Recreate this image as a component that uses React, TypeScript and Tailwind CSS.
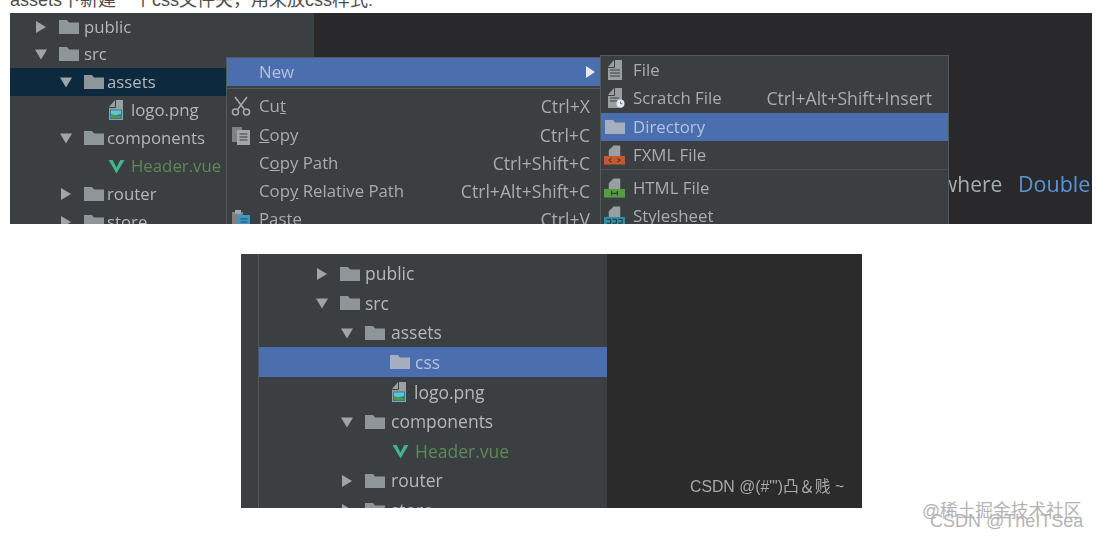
import type { ReactNode } from 'react'

const ui = "font-['Open_Sans','Noto_Sans',sans-serif]"

function Arrow({ open }: { open?: boolean }) {
  return (
    <svg viewBox="0 0 12 12" className="h-3 w-3 shrink-0">
      {open ? <path d="M0 1.5h12L6 11.5z" fill="#a0a4a6" /> : <path d="M1 0v12l10-6z" fill="#a0a4a6" />}
    </svg>
  )
}

function Folder({ color = '#8f9699', className = 'h-[14px] w-5' }: { color?: string; className?: string }) {
  return (
    <svg viewBox="0 0 20 14" className={`shrink-0 ${className}`}>
      <path d="M0 0h8l2 2.5h10V14H0z" fill={color} />
    </svg>
  )
}

function Sheet({ children }: { children?: ReactNode }) {
  return (
    <svg viewBox="0 0 20 20" className="h-5 w-5 shrink-0">
      <path d="M3 7l6-7h8v20H3z" fill="#9a9fa1" />
      <path d="M2.5 7.5h7V0" fill="none" stroke="#3c3f41" strokeWidth="1" />
      {children}
    </svg>
  )
}

function PngIcon() {
  return (
    <Sheet>
      <path d="M4 9.5h12V19H4z" fill="#2b7d92" />
      <path d="M5 10.5h10v3.5L5 16z" fill="#67c3d1" />
      <path d="M5 14l10 2.5V18H5z" fill="#4e9a4c" />
    </Sheet>
  )
}

function VueIcon() {
  return (
    <svg viewBox="0 0 18 16" className="h-[15px] w-[17px] shrink-0">
      <path d="M0.5 1h4.4L9 9l4.1-8h4.4L9 15.5z" fill="#3fb68b" />
    </svg>
  )
}

function LinesIcon() {
  return (
    <Sheet>
      <path d="M5 10h10M5 13h10M5 16h10" stroke="#3c3f41" strokeWidth="1.2" />
    </Sheet>
  )
}

function ClockIcon() {
  return (
    <Sheet>
      <path d="M5 10h9M5 13h7" stroke="#3c3f41" strokeWidth="1.2" />
      <circle cx="15.5" cy="15.5" r="4" fill="#e4e8ea" />
      <path d="M15.5 13.5v2.2h1.8" stroke="#3c6ea8" strokeWidth="0.9" fill="none" />
    </Sheet>
  )
}

function TagIcon({ color, tag }: { color: string; tag: string }) {
  return (
    <svg viewBox="0 0 22 20" className="ml-[-1px] h-5 w-[21px] shrink-0">
      <path d="M5 5l5-5h7v12H5z" fill="#9a9fa1" />
      <path d="M0 11h22v9H0z" fill={color} />
      <path d={tag} stroke="#2b2b2b" strokeWidth="1" fill="none" />
    </svg>
  )
}

function ScissorsIcon() {
  return (
    <svg viewBox="0 0 20 20" className="h-5 w-5 shrink-0" fill="none" stroke="#a9adaf" strokeWidth="1.5">
      <path d="M4 1l9 12M16 1L7 13" />
      <circle cx="4.5" cy="16" r="3" />
      <circle cx="15.5" cy="16" r="3" />
    </svg>
  )
}

function CopyIcon() {
  return (
    <svg viewBox="0 0 20 20" className="h-5 w-5 shrink-0">
      <path d="M1 2h10v15H1z" fill="#7d8284" />
      <path d="M6 5h13v15H6z" fill="#a3a7a9" />
      <path d="M8.5 9h8M8.5 12h8M8.5 15h8" stroke="#3c3f41" strokeWidth="1.1" />
    </svg>
  )
}

function PasteIcon() {
  return (
    <svg viewBox="0 0 20 20" className="h-5 w-5 shrink-0">
      <path d="M1 3h11v15H1z" fill="#7d8284" />
      <path d="M4 1h6v4H4z" fill="#a3a7a9" />
      <path d="M7 6h12v14H7z" fill="#3e97c4" />
      <path d="M9.5 10h7M9.5 13h7M9.5 16h7" stroke="#2b4a5c" strokeWidth="1.1" />
    </svg>
  )
}

type RowProps = {
  pad: string
  height: string
  gap: string
  arrow?: 'open' | 'closed'
  icon: ReactNode
  label: string
  className?: string
  labelClass?: string
}

// arrow takes a fixed slot so the icons of a level line up
function TreeRow({ pad, height, gap, arrow, icon, label, className = '', labelClass = 'text-[#b4b8ba]' }: RowProps) {
  return (
    <div className={`flex shrink-0 items-center ${height} ${pad} ${className}`}>
      {arrow && (
        <span className="mr-3 flex w-3 justify-center">
          <Arrow open={arrow === 'open'} />
        </span>
      )}
      {icon}
      <span className={`${gap} ${labelClass}`}>{label}</span>
    </div>
  )
}

function MenuRow({ icon, children, keys, className = '' }: { icon?: ReactNode; children: ReactNode; keys?: string; className?: string }) {
  return (
    <div className={`flex h-7 shrink-0 items-center pl-[4px] text-[#a9adaf] ${className}`}>
      <span className="flex w-7 shrink-0 items-center">{icon}</span>
      <span>{children}</span>
      {keys && <span className="ml-auto text-[17.6px]">{keys}</span>}
    </div>
  )
}

export default function App() {
  return (
    <div className={`relative h-[538px] w-[1099px] overflow-hidden bg-white ${ui}`}>
      <div className="h-[13px] overflow-hidden pl-[10px]">
        <p className="mt-[-10px] font-['Liberation_Sans','Noto_Sans_CJK_SC',sans-serif] text-[18px] leading-[20px] text-[#4d4d4d]">
          assets下新建一个css文件夹，用来放css样式:
        </p>
      </div>

      <div className="relative ml-[10px] flex h-[211px] w-[1082px] overflow-hidden bg-[#29292b] text-[16.8px] blur-[0.4px]">
        <div className="flex h-full w-[304px] flex-col bg-[#3c3f41]">
          <TreeRow pad="pl-[25px]" height="h-[27px]" gap="ml-[5px]" arrow="closed" icon={<Folder />} label="public" />
          <TreeRow pad="pl-[25px]" height="h-7" gap="ml-[5px]" arrow="open" icon={<Folder />} label="src" />
          <TreeRow pad="pl-[50px]" height="h-7" gap="ml-[3px]" arrow="open" icon={<Folder />} label="assets" className="bg-[#0d293e]" />
          <TreeRow pad="pl-[96px]" height="h-7" gap="ml-[5px]" icon={<PngIcon />} label="logo.png" />
          <TreeRow pad="pl-[50px]" height="h-7" gap="ml-[3px]" arrow="open" icon={<Folder />} label="components" />
          <TreeRow pad="pl-[98px]" height="h-7" gap="ml-[6px]" icon={<VueIcon />} label="Header.vue" labelClass="text-[#5c8a56]" />
          <TreeRow pad="pl-[50px]" height="h-7" gap="ml-[3px]" arrow="closed" icon={<Folder />} label="router" />
          <TreeRow pad="pl-[50px]" height="h-7" gap="ml-[3px]" arrow="closed" icon={<Folder />} label="store" />
        </div>

        <span className="absolute left-[931px] top-[157px] whitespace-nowrap text-[21px] leading-7 text-[#a9adaf]">where</span>
        <span className="absolute left-[1008px] top-[157px] whitespace-nowrap text-[21.5px] leading-7 text-[#5a94d6]">Double</span>

        {/* context menu */}
        <div className="absolute left-[216px] top-[44px] flex h-[200px] w-[375px] flex-col border border-[#55585a] bg-[#3c3f41] pr-[10px]">
          <MenuRow className="-mr-[10px] !text-[#b4c3dc] bg-[#4b6eaf]">New</MenuRow>
          <svg viewBox="0 0 10 12" className="absolute left-[359px] top-[8px] h-3 w-[10px]">
            <path d="M0 0v12l9-6z" fill="#e6e9ee" />
          </svg>
          <div className="-mr-[10px] mt-[2px] h-px shrink-0 bg-[#55585a]" />
          <div className="h-[3px] shrink-0" />
          <MenuRow icon={<ScissorsIcon />} keys="Ctrl+X" className="mb-px">Cu<u>t</u></MenuRow>
          <MenuRow icon={<CopyIcon />} keys="Ctrl+C"><u>C</u>opy</MenuRow>
          <MenuRow keys="Ctrl+Shift+C">C<u>o</u>py Path</MenuRow>
          <MenuRow keys="Ctrl+Alt+Shift+C">Cop<u>y</u> Relative Path</MenuRow>
          <MenuRow icon={<PasteIcon />} keys="Ctrl+V">Paste</MenuRow>
        </div>

        {/* New submenu */}
        <div className="absolute left-[590px] top-[42px] flex h-[200px] w-[349px] flex-col border border-[#55585a] bg-[#3c3f41]">
          <MenuRow icon={<LinesIcon />}>File</MenuRow>
          <MenuRow icon={<ClockIcon />} keys="Ctrl+Alt+Shift+Insert" className="mb-px pr-[16px]">Scratch File</MenuRow>
          <MenuRow icon={<Folder color="#a5afc0" />} className="!text-[#b4c3dc] bg-[#4b6eaf]">Directory</MenuRow>
          <MenuRow icon={<TagIcon color="#c45a2c" tag="M8 13.5L5 15.5l3 2M14 13.5l3 2-3 2" />}>FXML File</MenuRow>
          <div className="h-px shrink-0 bg-[#4c4f51]" />
          <div className="h-[4px] shrink-0" />
          <MenuRow icon={<TagIcon color="#549e3f" tag="M8 13v5M14 13v5M8 15.5h6" />}>HTML File</MenuRow>
          <MenuRow icon={<TagIcon color="#2f8fa6" tag="M3 13.5h4v4H3M9 13.5h4v4H9M15 13.5h4v4h-4" />}>Stylesheet</MenuRow>
        </div>
      </div>

      <div className="relative ml-[241px] mt-[30px] flex h-[254px] w-[621px] overflow-hidden bg-[#2b2b2c] text-[17.5px] blur-[0.4px]">
        <div className="w-[18px] shrink-0 border-r border-[#55585a] bg-[#3c3f41]" />
        <div className="flex h-full w-[348px] flex-col bg-[#3c3f41] pt-[5px]">
          <TreeRow pad="pl-[57px]" height="h-[29px]" gap="ml-[5px]" arrow="closed" icon={<Folder />} label="public" />
          <TreeRow pad="pl-[57px]" height="h-[30px]" gap="ml-[5px]" arrow="open" icon={<Folder />} label="src" />
          <TreeRow pad="pl-[82px]" height="h-[29px]" gap="ml-[6px]" arrow="open" icon={<Folder />} label="assets" />
          <TreeRow pad="pl-[131px]" height="h-[30px]" gap="ml-[5px]" icon={<Folder color="#a5afc0" />} label="css" className="bg-[#4b6eaf]" labelClass="text-[#b4c3dc]" />
          <TreeRow pad="pl-[130px]" height="h-[30px]" gap="ml-[5px]" icon={<PngIcon />} label="logo.png" />
          <TreeRow pad="pl-[82px]" height="h-[29px]" gap="ml-[6px]" arrow="open" icon={<Folder />} label="components" />
          <TreeRow pad="pl-[133px]" height="h-[30px]" gap="ml-[6px]" icon={<VueIcon />} label="Header.vue" labelClass="text-[#5c8a56]" />
          <TreeRow pad="pl-[82px]" height="h-[29px]" gap="ml-[6px]" arrow="closed" icon={<Folder />} label="router" />
          <TreeRow pad="pl-[82px]" height="h-[30px]" gap="ml-[6px]" arrow="closed" icon={<Folder />} label="store" />
        </div>
        <span className="absolute left-[449px] top-[223px] whitespace-nowrap font-['Liberation_Sans','Noto_Sans_CJK_SC',sans-serif] text-[15.8px] leading-5 text-[#a9a9a9]">
          CSDN @(#&quot;&apos;)凸＆贱 ~
        </span>
      </div>

      <div className="absolute left-[922px] top-[501px] whitespace-nowrap font-['Liberation_Sans','Noto_Sans_CJK_SC',sans-serif] text-[17.7px] leading-5 text-[#b4b4b4]">
        @稀土掘金技术社区
      </div>
      <div className="absolute left-[930px] top-[511px] whitespace-nowrap font-['Liberation_Sans','Noto_Sans_CJK_SC',sans-serif] text-[18px] leading-5 text-[#b4b4b4]">
        CSDN @TheITSea
      </div>
    </div>
  )
}
